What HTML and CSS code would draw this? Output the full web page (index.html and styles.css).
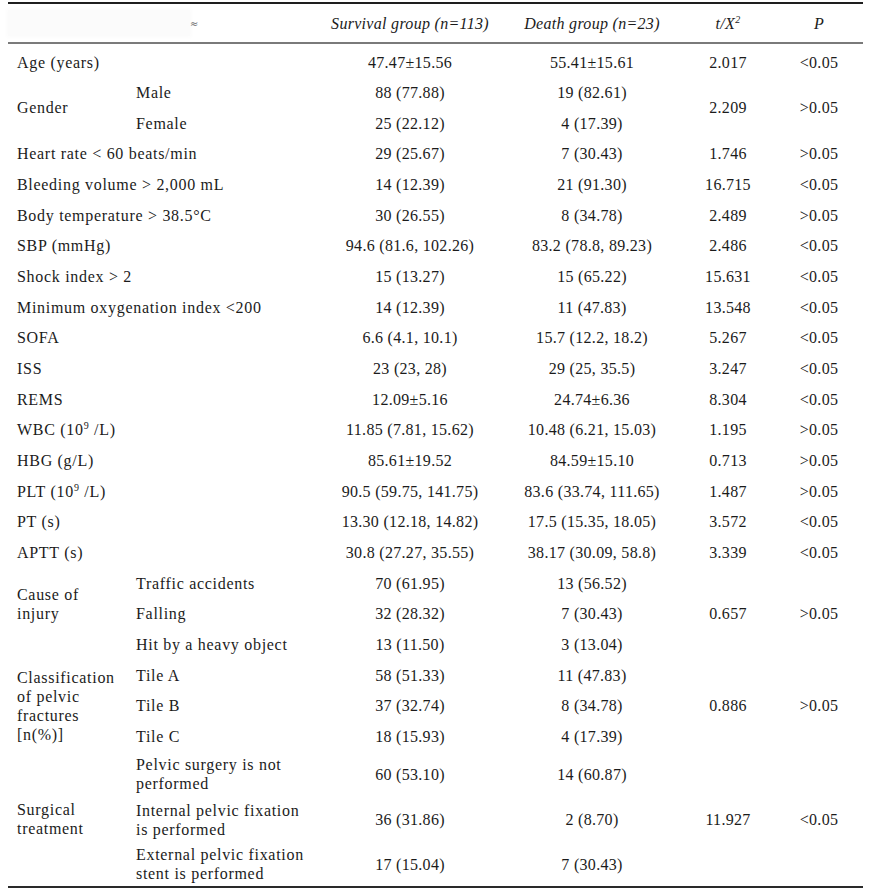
FILE: index.html
```html
<!DOCTYPE html>
<html lang="en">
<head>
<meta charset="utf-8">
<title>Clinical characteristics</title>
<link rel="stylesheet" href="styles.css">
</head>
<body>
<table class="stats">
  <colgroup>
    <col class="c-label"><col class="c-sub"><col class="c-surv"><col class="c-death"><col class="c-t"><col class="c-p">
  </colgroup>
  <thead>
    <tr>
      <th colspan="2" class="corner"><span class="ghost"></span><span class="mark">≈</span></th>
      <th>Survival group (n=113)</th>
      <th>Death group (n=23)</th>
      <th>t/X<sup>2</sup></th>
      <th>P</th>
    </tr>
  </thead>
  <tbody>
    <tr class="first"><td colspan="2" class="lbl">Age (years)</td><td>47.47±15.56</td><td>55.41±15.61</td><td>2.017</td><td>&lt;0.05</td></tr>
    <tr><td rowspan="2" class="lbl">Gender</td><td class="sub">Male</td><td>88 (77.88)</td><td>19 (82.61)</td><td rowspan="2">2.209</td><td rowspan="2">&gt;0.05</td></tr>
    <tr><td class="sub">Female</td><td>25 (22.12)</td><td>4 (17.39)</td></tr>
    <tr><td colspan="2" class="lbl">Heart rate &lt; 60 beats/min</td><td>29 (25.67)</td><td>7 (30.43)</td><td>1.746</td><td>&gt;0.05</td></tr>
    <tr><td colspan="2" class="lbl">Bleeding volume &gt; 2,000 mL</td><td>14 (12.39)</td><td>21 (91.30)</td><td>16.715</td><td>&lt;0.05</td></tr>
    <tr><td colspan="2" class="lbl">Body temperature &gt; 38.5°C</td><td>30 (26.55)</td><td>8 (34.78)</td><td>2.489</td><td>&gt;0.05</td></tr>
    <tr><td colspan="2" class="lbl">SBP (mmHg)</td><td>94.6 (81.6, 102.26)</td><td>83.2 (78.8, 89.23)</td><td>2.486</td><td>&lt;0.05</td></tr>
    <tr><td colspan="2" class="lbl">Shock index &gt; 2</td><td>15 (13.27)</td><td>15 (65.22)</td><td>15.631</td><td>&lt;0.05</td></tr>
    <tr><td colspan="2" class="lbl">Minimum oxygenation index &lt;200</td><td>14 (12.39)</td><td>11 (47.83)</td><td>13.548</td><td>&lt;0.05</td></tr>
    <tr><td colspan="2" class="lbl">SOFA</td><td>6.6 (4.1, 10.1)</td><td>15.7 (12.2, 18.2)</td><td>5.267</td><td>&lt;0.05</td></tr>
    <tr><td colspan="2" class="lbl">ISS</td><td>23 (23, 28)</td><td>29 (25, 35.5)</td><td>3.247</td><td>&lt;0.05</td></tr>
    <tr><td colspan="2" class="lbl">REMS</td><td>12.09±5.16</td><td>24.74±6.36</td><td>8.304</td><td>&lt;0.05</td></tr>
    <tr><td colspan="2" class="lbl">WBC (10<sup>9</sup> /L)</td><td>11.85 (7.81, 15.62)</td><td>10.48 (6.21, 15.03)</td><td>1.195</td><td>&gt;0.05</td></tr>
    <tr><td colspan="2" class="lbl">HBG (g/L)</td><td>85.61±19.52</td><td>84.59±15.10</td><td>0.713</td><td>&gt;0.05</td></tr>
    <tr><td colspan="2" class="lbl">PLT (10<sup>9</sup> /L)</td><td>90.5 (59.75, 141.75)</td><td>83.6 (33.74, 111.65)</td><td>1.487</td><td>&gt;0.05</td></tr>
    <tr><td colspan="2" class="lbl">PT (s)</td><td>13.30 (12.18, 14.82)</td><td>17.5 (15.35, 18.05)</td><td>3.572</td><td>&lt;0.05</td></tr>
    <tr><td colspan="2" class="lbl">APTT (s)</td><td>30.8 (27.27, 35.55)</td><td>38.17 (30.09, 58.8)</td><td>3.339</td><td>&lt;0.05</td></tr>
    <tr><td rowspan="3" class="lbl raised">Cause of<br>injury</td><td class="sub">Traffic accidents</td><td>70 (61.95)</td><td>13 (56.52)</td><td rowspan="3">0.657</td><td rowspan="3">&gt;0.05</td></tr>
    <tr><td class="sub">Falling</td><td>32 (28.32)</td><td>7 (30.43)</td></tr>
    <tr><td class="sub">Hit by a heavy object</td><td>13 (11.50)</td><td>3 (13.04)</td></tr>
    <tr><td rowspan="3" class="lbl">Classification<br>of pelvic<br>fractures<br>[n(%)]</td><td class="sub">Tile A</td><td>58 (51.33)</td><td>11 (47.83)</td><td rowspan="3">0.886</td><td rowspan="3">&gt;0.05</td></tr>
    <tr><td class="sub">Tile B</td><td>37 (32.74)</td><td>8 (34.78)</td></tr>
    <tr><td class="sub">Tile C</td><td>18 (15.93)</td><td>4 (17.39)</td></tr>
    <tr class="tall"><td rowspan="3" class="lbl">Surgical<br>treatment</td><td class="sub">Pelvic surgery is not<br>performed</td><td>60 (53.10)</td><td>14 (60.87)</td><td rowspan="3">11.927</td><td rowspan="3">&lt;0.05</td></tr>
    <tr class="tall"><td class="sub">Internal pelvic fixation<br>is performed</td><td>36 (31.86)</td><td>2 (8.70)</td></tr>
    <tr class="tall"><td class="sub">External pelvic fixation<br>stent is performed</td><td>17 (15.04)</td><td>7 (30.43)</td></tr>
  </tbody>
</table>
</body>
</html>
```
FILE: styles.css
```css
html, body {
  margin: 0;
  padding: 0;
  background: #ffffff;
}

body {
  font-family: "Liberation Serif", "Times New Roman", serif;
  color: #1b1b1b;
}

.stats {
  margin: 2px 0 0 8px;
  width: 855px;
  table-layout: fixed;
  border-collapse: collapse;
  border-bottom: 2px solid #2a2a2a;
  font-size: 16px;
  line-height: 19px;
  letter-spacing: 0.3px;
}

.c-label { width: 120px; }
.c-sub { width: 189px; }
.c-surv { width: 186px; }
.c-death { width: 178px; }
.c-t { width: 94px; }
.c-p { width: 88px; }

.stats th {
  height: 38px;
  padding: 0;
  font-weight: normal;
  font-style: italic;
  text-align: center;
  vertical-align: middle;
  border-top: 2px solid #1e1e1e;
  border-bottom: 2px solid #7a7a7a;
}

.stats th.corner {
  text-align: left;
  font-style: normal;
}

.ghost {
  display: inline-block;
  vertical-align: middle;
  width: 182px;
  height: 26px;
  background: #fbfbfb;
  box-shadow: 0 0 4px 2px #fcfcfc;
}

.mark {
  display: inline-block;
  vertical-align: middle;
  margin-left: 0;
  font-size: 10px;
  color: #666;
  font-family: "DejaVu Sans", sans-serif;
}

.stats sup {
  font-size: 10px;
  line-height: 0;
  vertical-align: 6px;
}

.stats tbody tr {
  height: 30.66px;
}

.stats td {
  padding: 0;
  text-align: center;
  vertical-align: middle;
}

.stats td.lbl {
  text-align: left;
  padding-left: 9px;
  letter-spacing: 0.7px;
}

.stats td.sub {
  text-align: left;
  padding-left: 8px;
  letter-spacing: 0.7px;
}

.stats td.raised {
  padding-bottom: 20px;
}

.stats tr.first {
  height: 34.3px;
}

.stats tr.first td {
  padding-top: 3.7px;
}

.stats tr.tall {
  height: 45.2px;
}
```
